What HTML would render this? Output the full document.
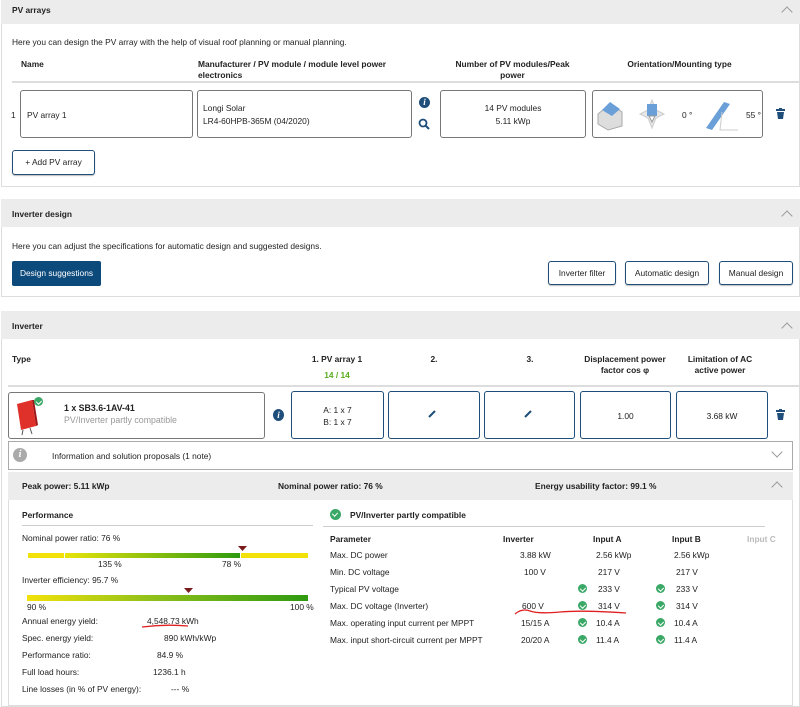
<!DOCTYPE html>
<html><head><meta charset="utf-8"><style>
*{box-sizing:border-box;margin:0;padding:0}
body{width:800px;height:707px;background:#fff;font-family:"Liberation Sans",sans-serif;font-size:8.4px;color:#222;position:relative;overflow:hidden}
.a{position:absolute;white-space:nowrap}
.b{font-weight:bold}
.bar{position:absolute;background:#ececec}
.box{position:absolute;border:1px solid #777;border-radius:3px;background:#fff}
.bbox{position:absolute;border:1px solid #1f4e7a;border-radius:3px;background:#fff}
.c{text-align:center}
.chev{position:absolute;width:8px;height:8px;border-left:1px solid #999;border-top:1px solid #999}
.btn{position:absolute;border:1px solid #1f4e7a;border-radius:3px;background:#fff;text-align:center;color:#222;box-shadow:0 1px 1px #bbb}
.chk{position:absolute;width:9px;height:9px;border-radius:50%;background:#3aa866}
.chk:after{content:"";position:absolute;left:2.5px;top:1.5px;width:2.5px;height:4px;border-right:1.5px solid #fff;border-bottom:1.5px solid #fff;transform:rotate(45deg)}
.line{position:absolute;background:#ddd}
</style></head><body>
<!-- PV arrays panel -->
<div style="position:absolute;left:1px;top:0;width:799px;height:187px;border:1px solid #ddd"></div>
<div class="bar" style="left:1px;top:0;width:799px;height:24px"></div>
<div class="a b" style="left:12px;top:5px">PV arrays</div>
<div class="chev" style="left:783px;top:8px;transform:rotate(45deg)"></div>
<div class="a" style="left:12px;top:37px">Here you can design the PV array with the help of visual roof planning or manual planning.</div>
<div class="a b" style="left:21px;top:59px">Name</div>
<div class="a b" style="left:198px;top:59px;line-height:11px">Manufacturer / PV module / module level power<br>electronics</div>
<div class="a b c" style="left:440px;top:59px;width:145px;line-height:11px">Number of PV modules/Peak<br>power</div>
<div class="a b c" style="left:592px;top:59px;width:175px">Orientation/Mounting type</div>
<div class="line" style="left:12px;top:81px;width:788px;height:2px;background:#ddd"></div>
<div class="a" style="left:11px;top:110px">1</div>
<div class="box" style="left:20px;top:90px;width:173px;height:48px"></div>
<div class="a" style="left:27px;top:110px">PV array 1</div>
<div class="box" style="left:197px;top:90px;width:215px;height:48px"></div>
<div class="a" style="left:203px;top:102px;line-height:13px">Longi Solar<br>LR4-60HPB-365M (04/2020)</div>
<div class="a" style="left:419px;top:97px;width:11px;height:11px;border-radius:50%;background:#1f4e7a;color:#fff;font-weight:bold;font-style:italic;text-align:center;font-size:9px;line-height:11px;font-family:'Liberation Serif',serif">i</div>
<svg class="a" style="left:418px;top:118px" width="12" height="12"><circle cx="5" cy="5" r="3.5" fill="none" stroke="#1f4e7a" stroke-width="1.8"/><path d="M7.5 7.5L11 11" stroke="#1f4e7a" stroke-width="2"/></svg>
<div class="box" style="left:440px;top:90px;width:146px;height:48px"></div>
<div class="a c" style="left:440px;top:102px;width:146px;line-height:13px">14 PV modules<br>5.11 kWp</div>
<div class="box" style="left:592px;top:90px;width:171px;height:48px"></div>
<svg class="a" style="left:596px;top:96px" width="170" height="38">
<path d="M2 18L14 8L26 16L26 30L12 34L2 28Z" fill="#ddd" stroke="#aaa"/><path d="M6 14L14 6L24 13L16 20Z" fill="#6a9fd8"/>
<path d="M56 4L52 14L44 18L52 22L56 32L60 22L68 18L60 14Z" fill="#e8e8e8" stroke="#ccc"/><rect x="51" y="8" width="10" height="12" fill="#6a9fd8"/><path d="M53 20L56 26L59 20Z" fill="#fff" stroke="#999"/>
<path d="M110 32L128 6L134 8L116 34Z" fill="#6a9fd8"/><path d="M126 16L124 34L142 34" fill="none" stroke="#ccc"/>
</svg>
<div class="a" style="left:682px;top:110px">0 °</div>
<div class="a" style="left:746px;top:110px">55 °</div>
<svg class="a" style="left:776px;top:108px" width="9" height="11"><rect x="0" y="1" width="9" height="2" fill="#1f4e7a"/><rect x="3" y="0" width="3" height="1" fill="#1f4e7a"/><path d="M1 4H8L7 11H2Z" fill="#1f4e7a"/></svg>
<div class="btn" style="left:12px;top:150px;width:83px;height:25px;line-height:23px">+ Add PV array</div>

<!-- Inverter design -->
<div style="position:absolute;left:1px;top:199px;width:799px;height:98px;border:1px solid #ddd"></div>
<div class="bar" style="left:1px;top:199px;width:799px;height:28px"></div>
<div class="a b" style="left:12px;top:209px">Inverter design</div>
<div class="chev" style="left:783px;top:212px;transform:rotate(45deg)"></div>
<div class="a" style="left:12px;top:241px">Here you can adjust the specifications for automatic design and suggested designs.</div>
<div class="a c" style="left:12px;top:261px;width:89px;height:25px;line-height:25px;background:#0d4a7c;color:#fff;border-radius:2px">Design suggestions</div>
<div class="btn" style="left:548px;top:261px;width:68px;height:24px;line-height:22px">Inverter filter</div>
<div class="btn" style="left:625px;top:261px;width:84px;height:24px;line-height:22px">Automatic design</div>
<div class="btn" style="left:719px;top:261px;width:74px;height:24px;line-height:22px">Manual design</div>

<!-- Inverter -->
<div style="position:absolute;left:1px;top:311px;width:799px;height:396px;border:1px solid #ddd"></div>
<div class="bar" style="left:1px;top:311px;width:799px;height:28px"></div>
<div class="a b" style="left:12px;top:321px">Inverter</div>
<div class="chev" style="left:783px;top:324px;transform:rotate(45deg)"></div>
<div class="a b" style="left:12px;top:354px">Type</div>
<div class="a b c" style="left:291px;top:354px;width:92px">1. PV array 1</div>
<div class="a b c" style="left:291px;top:370px;width:92px;color:#5aae1e">14 / 14</div>
<div class="a b c" style="left:388px;top:354px;width:92px">2.</div>
<div class="a b c" style="left:484px;top:354px;width:92px">3.</div>
<div class="a b c" style="left:575px;top:354px;width:100px;line-height:11px">Displacement power<br>factor cos φ</div>
<div class="a b c" style="left:670px;top:354px;width:100px;line-height:11px">Limitation of AC<br>active power</div>
<div class="line" style="left:8px;top:385px;width:792px;height:2px"></div>
<div class="box" style="left:8px;top:392px;width:257px;height:47px"></div>
<svg class="a" style="left:14px;top:396px" width="28" height="40"><path d="M3 8L18 4L22 30L7 34Z" fill="#e0302a"/><path d="M18 4L22 30L24 29L20 4Z" fill="#a01818"/><path d="M9 34L8 39M16 32L18 38" stroke="#555"/></svg>
<div class="chk" style="left:34px;top:397px"></div>
<div class="a b" style="left:64px;top:403px;font-size:8.8px">1 x SB3.6-1AV-41</div>
<div class="a" style="left:64px;top:415px;color:#999;font-size:8.8px">PV/Inverter partly compatible</div>
<div class="a" style="left:273px;top:409px;width:11px;height:12px;border-radius:50%;background:#1f4e7a;color:#fff;font-weight:bold;font-style:italic;text-align:center;font-size:9px;line-height:12px;font-family:'Liberation Serif',serif">i</div>
<div class="bbox" style="left:291px;top:391px;width:93px;height:48px"></div>
<div class="a c" style="left:291px;top:404px;width:93px;line-height:12px">A: 1 x 7<br>B: 1 x 7</div>
<div class="bbox" style="left:388px;top:391px;width:92px;height:48px"></div>
<div class="bbox" style="left:484px;top:391px;width:91px;height:48px"></div>
<svg class="a" style="left:428px;top:410px" width="8" height="8"><path d="M1 7L7 1" stroke="#1f4e7a" stroke-width="2"/></svg>
<svg class="a" style="left:524px;top:410px" width="8" height="8"><path d="M1 7L7 1" stroke="#1f4e7a" stroke-width="2"/></svg>
<div class="bbox" style="left:580px;top:391px;width:91px;height:48px"></div>
<div class="a c" style="left:580px;top:411px;width:91px">1.00</div>
<div class="bbox" style="left:676px;top:391px;width:92px;height:48px"></div>
<div class="a c" style="left:676px;top:411px;width:92px">3.68 kW</div>
<svg class="a" style="left:776px;top:409px" width="9" height="11"><rect x="0" y="1" width="9" height="2" fill="#1f4e7a"/><rect x="3" y="0" width="3" height="1" fill="#1f4e7a"/><path d="M1 4H8L7 11H2Z" fill="#1f4e7a"/></svg>
<div style="position:absolute;left:8px;top:441px;width:785px;height:29px;border:1px solid #aaa"></div>
<div class="a" style="left:13px;top:448px;width:14px;height:14px;border-radius:50%;background:#aaa;color:#fff;font-weight:bold;font-style:italic;text-align:center;font-size:10px;line-height:14px;font-family:'Liberation Serif',serif">i</div>
<div class="a" style="left:52px;top:451px">Information and solution proposals (1 note)</div>
<div class="chev" style="left:773px;top:448px;transform:rotate(225deg)"></div>
<div class="bar" style="left:8px;top:472px;width:785px;height:28px"></div>
<div class="a b" style="left:22px;top:481px">Peak power: 5.11 kWp</div>
<div class="a b" style="left:278px;top:481px">Nominal power ratio: 76 %</div>
<div class="a b" style="left:535px;top:481px">Energy usability factor: 99.1 %</div>
<div class="chev" style="left:773px;top:483px;transform:rotate(45deg)"></div>
<div style="position:absolute;left:8px;top:500px;width:785px;height:206px;border:1px solid #ddd;border-top:none"></div>

<div class="a b" style="left:22px;top:510px">Performance</div>
<div class="line" style="left:22px;top:525px;width:291px;height:1px;background:#ccc"></div>
<div class="a" style="left:22px;top:533px">Nominal power ratio: 76 %</div>
<div class="a" style="left:28px;top:553px;width:36px;height:5px;background:#f2e20a"></div>
<div class="a" style="left:65px;top:553px;width:175px;height:5px;background:linear-gradient(90deg,#e8e40a,#2e9a10)"></div>
<div class="a" style="left:241px;top:553px;width:67px;height:5px;background:#f2e20a"></div>
<svg class="a" style="left:238px;top:546px" width="9" height="6"><path d="M0 0H9L4.5 5Z" fill="#7a1a1a"/></svg>
<div class="a" style="left:98px;top:559px">135 %</div>
<div class="a" style="left:222px;top:559px">78 %</div>
<div class="a" style="left:22px;top:575px">Inverter efficiency: 95.7 %</div>
<svg class="a" style="left:184px;top:588px" width="9" height="6"><path d="M0 0H9L4.5 5Z" fill="#7a1a1a"/></svg>
<div class="a" style="left:27px;top:595px;width:281px;height:6px;background:linear-gradient(90deg,#f2e20a,#8ec01a 45%,#2e9a10)"></div>
<div class="a" style="left:27px;top:602px">90 %</div>
<div class="a" style="left:290px;top:602px">100 %</div>
<div class="a" style="left:22px;top:616px">Annual energy yield:</div><div class="a" style="left:147px;top:616px">4,548.73 kWh</div>
<div class="a" style="left:22px;top:633px">Spec. energy yield:</div><div class="a" style="left:164px;top:633px">890 kWh/kWp</div>
<div class="a" style="left:22px;top:650px">Performance ratio:</div><div class="a" style="left:157px;top:650px">84.9 %</div>
<div class="a" style="left:22px;top:667px">Full load hours:</div><div class="a" style="left:153px;top:667px">1236.1 h</div>
<div class="a" style="left:22px;top:684px">Line losses (in % of PV energy):</div><div class="a" style="left:171px;top:684px">--- %</div>

<div class="chk" style="left:330px;top:509px;width:11px;height:11px"></div>
<div class="a b" style="left:350px;top:510px">PV/Inverter partly compatible</div>
<div class="line" style="left:323px;top:526px;width:442px;height:1px;background:#ccc"></div>
<div class="a b" style="left:330px;top:534px">Parameter</div>
<div class="a b" style="left:503px;top:534px">Inverter</div>
<div class="a b" style="left:593px;top:534px">Input A</div>
<div class="a b" style="left:672px;top:534px">Input B</div>
<div class="a b" style="left:747px;top:534px;color:#bbb">Input C</div>
<div class="a" style="left:330px;top:550px">Max. DC power</div><div class="a" style="left:520px;top:550px">3.88 kW</div><div class="a" style="left:596px;top:550px">2.56 kWp</div><div class="a" style="left:674px;top:550px">2.56 kWp</div>
<div class="a" style="left:330px;top:567px">Min. DC voltage</div><div class="a" style="left:524px;top:567px">100 V</div><div class="a" style="left:598px;top:567px">217 V</div><div class="a" style="left:676px;top:567px">217 V</div>
<div class="a" style="left:330px;top:584px">Typical PV voltage</div><div class="chk" style="left:578px;top:584px"></div><div class="a" style="left:598px;top:584px">233 V</div><div class="chk" style="left:656px;top:584px"></div><div class="a" style="left:676px;top:584px">233 V</div>
<div class="a" style="left:330px;top:601px">Max. DC voltage (Inverter)</div><div class="a" style="left:522px;top:601px">600 V</div><div class="chk" style="left:578px;top:601px"></div><div class="a" style="left:598px;top:601px">314 V</div><div class="chk" style="left:656px;top:601px"></div><div class="a" style="left:676px;top:601px">314 V</div>
<div class="a" style="left:330px;top:618px">Max. operating input current per MPPT</div><div class="a" style="left:521px;top:618px">15/15 A</div><div class="chk" style="left:578px;top:618px"></div><div class="a" style="left:596px;top:618px">10.4 A</div><div class="chk" style="left:656px;top:618px"></div><div class="a" style="left:674px;top:618px">10.4 A</div>
<div class="a" style="left:330px;top:635px">Max. input short-circuit current per MPPT</div><div class="a" style="left:521px;top:635px">20/20 A</div><div class="chk" style="left:578px;top:635px"></div><div class="a" style="left:596px;top:635px">11.4 A</div><div class="chk" style="left:656px;top:635px"></div><div class="a" style="left:674px;top:635px">11.4 A</div>

<svg class="a" style="left:0;top:0" width="800" height="707"><path d="M142 627Q165 624 188 626" fill="none" stroke="#e02020" stroke-width="1.3"/><path d="M515 614Q522 608 530 611T560 612T626 613" fill="none" stroke="#e02020" stroke-width="1.3"/></svg>
</body></html>
